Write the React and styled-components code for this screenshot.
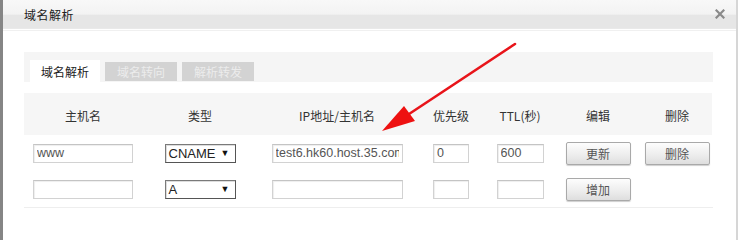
import React from "react";
import styled, { createGlobalStyle } from "styled-components";

const GlobalStyle = createGlobalStyle`
  html, body {
    margin: 0;
    padding: 0;
    background: #fff;
  }
  body {
    font-family: "Noto Sans CJK SC", "Liberation Sans", sans-serif;
    color: #333;
  }
`;

const Dialog = styled.div`
  position: relative;
  width: 738px;
  height: 240px;
  box-sizing: border-box;
  border-left: 3px solid #858585;
  border-right: 2px solid #d6d6d6;
  background: #fff;
  overflow: hidden;
`;

const TitleBar = styled.div`
  display: flex;
  align-items: center;
  justify-content: space-between;
  height: 28px;
  padding: 0 9px 0 21px;
  background: linear-gradient(to bottom, #f8f8f8 0%, #f3f3f3 50%, #e6e6e6 55%, #e6e6e6 100%);
  border-bottom: 1px solid #e9e9e9;
  box-shadow: 0 1px 0 #fff, 0 2px 0 #f0f0f0;
`;

const Title = styled.span`
  font-size: 12px;
  color: #222;
  letter-spacing: 0.5px;
`;

const Close = styled.span`
  display: flex;
  width: 14px;
  height: 14px;
  align-items: center;
  justify-content: center;
`;

const Body = styled.div`
  padding: 23px 23px 0 21px;
`;

const TabBar = styled.div`
  display: flex;
  align-items: flex-end;
  gap: 5px;
  height: 30px;
  padding-left: 6px;
  background: #f5f5f5;
`;

const Tab = styled.div`
  display: flex;
  align-items: center;
  justify-content: center;
  width: ${(p) => (p.$active ? "70px" : "72px")};
  height: ${(p) => (p.$active ? "22px" : "19px")};
  font-size: 12px;
  color: ${(p) => (p.$active ? "#222" : "#ececec")};
  background: ${(p) => (p.$active ? "#fff" : "#d3d3d3")};
  margin-bottom: ${(p) => (p.$active ? "0" : "1px")};
`;

const Table = styled.div`
  display: grid;
  grid-template-columns: 118px 116px 158px 70px 68px 88px 70px;
  grid-template-rows: 42px 36px 36px;
  margin-top: 11px;
  border-bottom: 1px solid #eeeeee;
  align-items: center;
  justify-items: center;
`;

const HeadCell = styled.div`
  align-self: stretch;
  justify-self: stretch;
  display: flex;
  align-items: center;
  justify-content: center;
  padding-top: 2px;
  background: #f6f6f6;
  font-size: 12px;
  color: #333;
`;

const Field = styled.input`
  box-sizing: border-box;
  width: ${(p) => p.$w}px;
  height: 19px;
  padding: 0 3px;
  border: 1px solid #d2d2d2;
  border-top-color: #c4c4c4;
  box-shadow: inset 1px 1px 1px #eee;
  font-family: "Liberation Sans", Arial, sans-serif;
  font-size: 12.5px;
  color: #555;
  background: #fff;
  outline: none;
`;

const Select = styled.div`
  box-sizing: border-box;
  display: flex;
  align-items: center;
  justify-content: space-between;
  width: 71px;
  height: 19px;
  padding: 0 5px 0 3px;
  border: 1px solid #7a7a7a;
  border-right-color: #555;
  border-bottom-color: #555;
  box-shadow: inset 1px 1px 0 #ddd;
  font-family: "Liberation Sans", Arial, sans-serif;
  font-size: 13px;
  color: #222;
  background: #fff;
`;

const Caret = styled.span`
  font-size: 9px;
  color: #111;
`;

const Button = styled.button`
  box-sizing: border-box;
  width: 65px;
  height: 23px;
  padding: 0;
  border: 1px solid #a9a9a9;
  border-radius: 2px;
  background: linear-gradient(to bottom, #fdfdfd 0%, #ececec 60%, #dedede 100%);
  box-shadow: 0 1px 1px #cfcfcf;
  font-family: "Noto Sans CJK SC", sans-serif;
  font-size: 12px;
  color: #555;
`;

const Arrow = styled.svg`
  position: absolute;
  left: 0;
  top: 0;
  pointer-events: none;
`;

const columns = ["主机名", "类型", "IP地址/主机名", "优先级", "TTL(秒)", "编辑", "删除"];

const rows = [
  { host: "www", type: "CNAME", target: "test6.hk60.host.35.com", prio: "0", ttl: "600", actions: ["更新", "删除"] },
  { host: "", type: "A", target: "", prio: "", ttl: "", actions: ["增加"] },
];

export default function App() {
  return (
    <>
      <GlobalStyle />
      <Dialog>
        <TitleBar>
          <Title>域名解析</Title>
          <Close>
            <svg width="10" height="10" viewBox="0 0 10 10">
              <path d="M1.5 1.5 L8.5 8.5 M8.5 1.5 L1.5 8.5" stroke="#8a8a8a" strokeWidth="2.2" strokeLinecap="square" />
            </svg>
          </Close>
        </TitleBar>
        <Body>
          <TabBar>
            <Tab $active>域名解析</Tab>
            <Tab>域名转向</Tab>
            <Tab>解析转发</Tab>
          </TabBar>
          <Table>
            {columns.map((c) => (
              <HeadCell key={c}>{c}</HeadCell>
            ))}
            {rows.map((r, i) => (
              <React.Fragment key={i}>
                <Field $w={100} defaultValue={r.host} />
                <Select>
                  <span>{r.type}</span>
                  <Caret>▼</Caret>
                </Select>
                <Field $w={131} defaultValue={r.target} />
                <Field $w={36} defaultValue={r.prio} />
                <Field $w={47} defaultValue={r.ttl} />
                <Button>{r.actions[0]}</Button>
                {r.actions[1] ? <Button>{r.actions[1]}</Button> : <span />}
              </React.Fragment>
            ))}
          </Table>
        </Body>
        <Arrow width="738" height="240" viewBox="0 0 738 240">
          <line x1="512" y1="44" x2="400" y2="118" stroke="#e8141a" strokeWidth="2.6" strokeLinecap="round" />
          <polygon points="379,131 401,106 412,121" fill="#ee1111" />
        </Arrow>
      </Dialog>
    </>
  );
}
